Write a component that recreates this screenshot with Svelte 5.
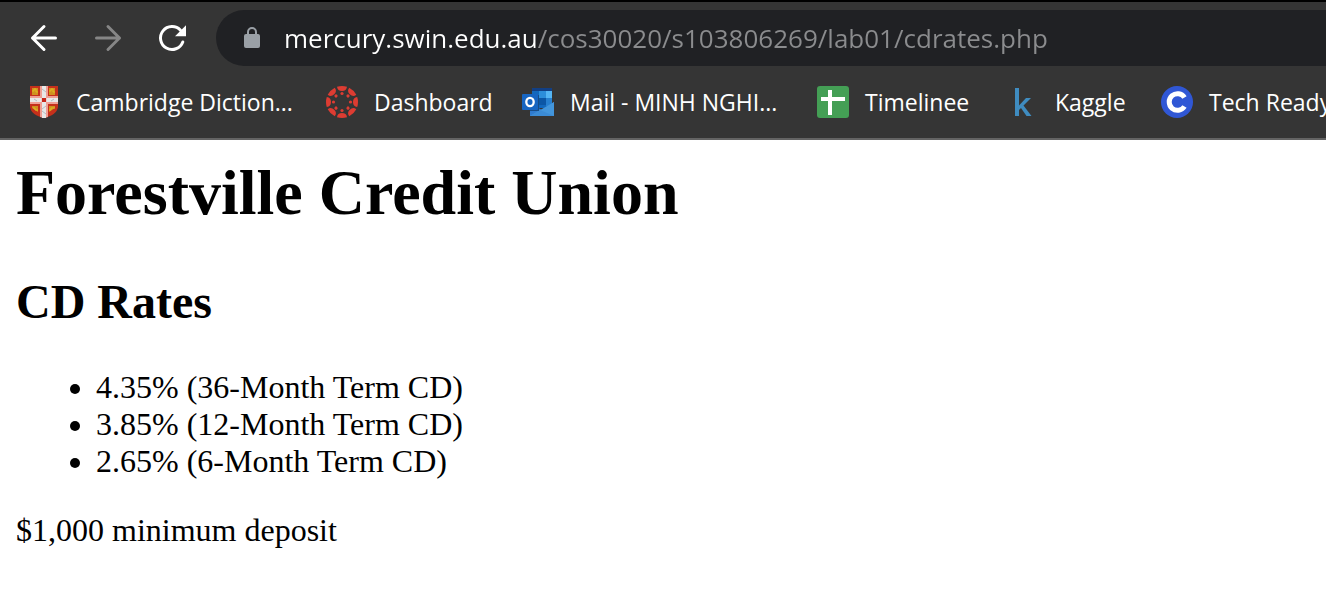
<script>
  const rates = [
    { rate: '4.35%', term: '36-Month' },
    { rate: '3.85%', term: '12-Month' },
    { rate: '2.65%', term: '6-Month' }
  ];
  const petals = [0, 45, 90, 135, 180, 225, 270, 315];
  let address = $state('mercury.swin.edu.au/cos30020/s103806269/lab01/cdrates.php');
</script>

<header>
  <nav class="toolbar" aria-label="Navigation">
    <div class="buttons">
      <button type="button" aria-label="Back">
        <svg width="32" height="32" viewBox="0 0 32 32" fill="none" stroke="#fff" stroke-width="3" stroke-linecap="round" stroke-linejoin="round">
          <path d="M27.5 16H4.5M16 4.5L4.5 16L16 27.5" />
        </svg>
      </button>
      <button type="button" aria-label="Forward" disabled>
        <svg width="32" height="32" viewBox="0 0 32 32" fill="none" stroke="#868686" stroke-width="3" stroke-linecap="round" stroke-linejoin="round">
          <path d="M4.5 16H27.5M16 4.5L27.5 16L16 27.5" />
        </svg>
      </button>
      <button type="button" aria-label="Reload">
        <svg width="32" height="32" viewBox="0 0 32 32">
          <path d="M24.5 8.2A11.5 11.5 0 1 0 26.8 20" fill="none" stroke="#fff" stroke-width="3" stroke-linecap="round" />
          <path d="M30 3.3V14.2H19z" fill="#fff" />
        </svg>
      </button>
    </div>
    <label class="address">
      <svg width="16" height="22" viewBox="0 0 16 22" aria-hidden="true">
        <path d="M4 9V5a4 4 0 0 1 8 0V9" fill="none" stroke="#9aa0a6" stroke-width="2" />
        <rect y="7" width="16" height="14" rx="2" fill="#9aa0a6" />
      </svg>
      <input type="text" bind:value={address} aria-label="Address" spellcheck="false" />
    </label>
  </nav>

  <nav class="bookmarks" aria-label="Bookmarks">
    <a href="#cambridge">
      <svg width="32" height="32" viewBox="0 0 32 32" aria-hidden="true">
        <path d="M2 0H30V21C29 27 24 30 16 32C8 30 3 27 2 21Z" fill="#c5301b" />
        <path d="M4 2H10V9H4zM21 2H27V9H21zM4 20H10V26L4 22zM21 20H27V22L21 26z" fill="#cf921f" />
        <path d="M4 5H6V3H8V6H10M21 5H23V3H25V6H27M5 22H7V24H10M21 24H23V22H27" fill="none" stroke="#dfba22" />
        <path d="M12 0H20V31L16 32L12 31zM2 10H30V18H2z" fill="#ef9f94" />
        <path d="M14 0H18V32H14zM2 12H30V16H2z" fill="#e8e8e8" />
        <path d="M14 3L18 6M18 20L14 23M14 25L18 28M6 13L9 15M23 15L26 13" stroke="#b9bdc0" fill="none" />
        <rect x="13" y="12" width="6" height="4" fill="#e8d0cc" />
        <rect x="14" y="12" width="4" height="4" fill="#c7271b" />
      </svg>
      <span>Cambridge Diction...</span>
    </a>
    <a href="#dashboard">
      <svg width="32" height="32" viewBox="0 0 32 32" fill="#dd3c32" aria-hidden="true">
        {#each petals as angle}
          <g transform="rotate({angle} 16 16)">
            <path d="M11 .8Q16 -.8 21 .8Q20.5 5 16 5Q11.5 5 11 .8" />
            <circle cx="16" cy="7.5" r="1.6" />
          </g>
        {/each}
      </svg>
      <span>Dashboard</span>
    </a>
    <a href="#mail">
      <svg width="32" height="32" viewBox="0 0 32 32" aria-hidden="true">
        <path d="M10 2H30V22H10z" fill="#1268bd" />
        <path d="M10 2H30V5H10z" fill="#123f83" />
        <path d="M17 5H24V12H17z" fill="#2c8edb" />
        <path d="M24 5H30V12H24z" fill="#54b5f4" />
        <path d="M17 12H24V19H17z" fill="#0c57a6" />
        <path d="M24 12H30V20H24z" fill="#2780d0" />
        <path d="M8 17L20 24L32 16V30H8z" fill="#2f7bcf" />
        <path d="M8 30L32 16V30z" fill="#4396dc" />
        <path d="M18 24L32 30H8z" fill="#3b8bd5" />
        <path d="M10 9H17V25H8V24H10z" fill="#174c85" />
        <rect y="8" width="16" height="16" rx="1" fill="#1765c1" />
        <ellipse cx="8" cy="16" rx="3.7" ry="4.1" fill="none" stroke="#fff" stroke-width="2.3" />
      </svg>
      <span>Mail - MINH NGHI...</span>
    </a>
    <a href="#timelinee">
      <svg width="32" height="32" viewBox="0 0 32 32" aria-hidden="true">
        <rect width="32" height="32" rx="3" fill="#449f55" />
        <path d="M11 4H15V11H28V15H15V29H11V15H4V11H11z" fill="#fff" />
      </svg>
      <span>Timelinee</span>
    </a>
    <a href="#kaggle">
      <svg width="32" height="32" viewBox="0 0 32 32" aria-hidden="true">
        <path d="M8 2H12V19.5L19 12H24L16.5 19.5L24.5 30H19.5L14 22L12 24V30H8z" fill="#3f8cc0" />
      </svg>
      <span>Kaggle</span>
    </a>
    <a href="#tech-ready">
      <svg width="32" height="32" viewBox="0 0 32 32" aria-hidden="true">
        <circle cx="16" cy="16" r="16" fill="#3057d5" />
        <path d="M23.5 11.5A8.3 8.3 0 1 0 23.5 20.5" fill="none" stroke="#fff" stroke-width="5" />
      </svg>
      <span>Tech Ready</span>
    </a>
  </nav>
</header>

<main>
  <h1>Forestville Credit Union</h1>
  <h2>CD Rates</h2>
  <ul>
    {#each rates as item}
      <li>{item.rate} ({item.term} Term CD)</li>
    {/each}
  </ul>
  <p>$1,000 minimum deposit</p>
</main>

<style>
  :global(body) {
    margin: 0;
    background: #fff;
  }
  header {
    overflow: hidden;
    border-top: 2px solid #000;
    border-bottom: 2px solid #646464;
    background: #353535;
    font-family: "Segoe UI", "Open Sans", sans-serif;
  }
  .toolbar {
    display: flex;
    gap: 28px;
    padding: 8px 0 0 28px;
  }
  .buttons {
    display: flex;
    align-items: center;
    gap: 32px;
  }
  button {
    display: flex;
    padding: 0;
    border: 0;
    background: none;
  }
  svg {
    flex: none;
    display: block;
  }
  .address {
    flex: 1;
    display: flex;
    align-items: center;
    gap: 24px;
    height: 56px;
    padding-left: 28px;
    border-radius: 28px 0 0 28px;
    background: #202124;
  }
  input {
    flex: 1;
    min-width: 0;
    padding: 0;
    border: 0;
    outline: 0;
    background: linear-gradient(90deg, #fff 253px, #8b8c8e 253px);
    background-clip: text;
    color: transparent;
    caret-color: #fff;
    font: 26px/40px "Segoe UI", "Open Sans", sans-serif;
  }
  .bookmarks {
    display: grid;
    grid-template-columns: 298px 196px 295px 190px 154px max-content;
    height: 72px;
    padding-left: 28px;
    align-items: center;
  }
  .bookmarks a {
    display: flex;
    align-items: center;
    gap: 16px;
    color: #fff;
    font-size: 23px;
    line-height: 32px;
    text-decoration: none;
    white-space: nowrap;
  }
  main {
    padding: 16px;
    color: #000;
    font: 32px/37px "Liberation Serif", serif;
  }
  h1 {
    margin: 0 0 44px;
    font-size: 64px;
    line-height: 74px;
  }
  h2 {
    margin: 0 0 40px;
    font-size: 48px;
    line-height: 55px;
  }
  ul {
    margin: 0 0 32px;
    padding-left: 80px;
  }
  p {
    margin: 0;
  }
</style>
